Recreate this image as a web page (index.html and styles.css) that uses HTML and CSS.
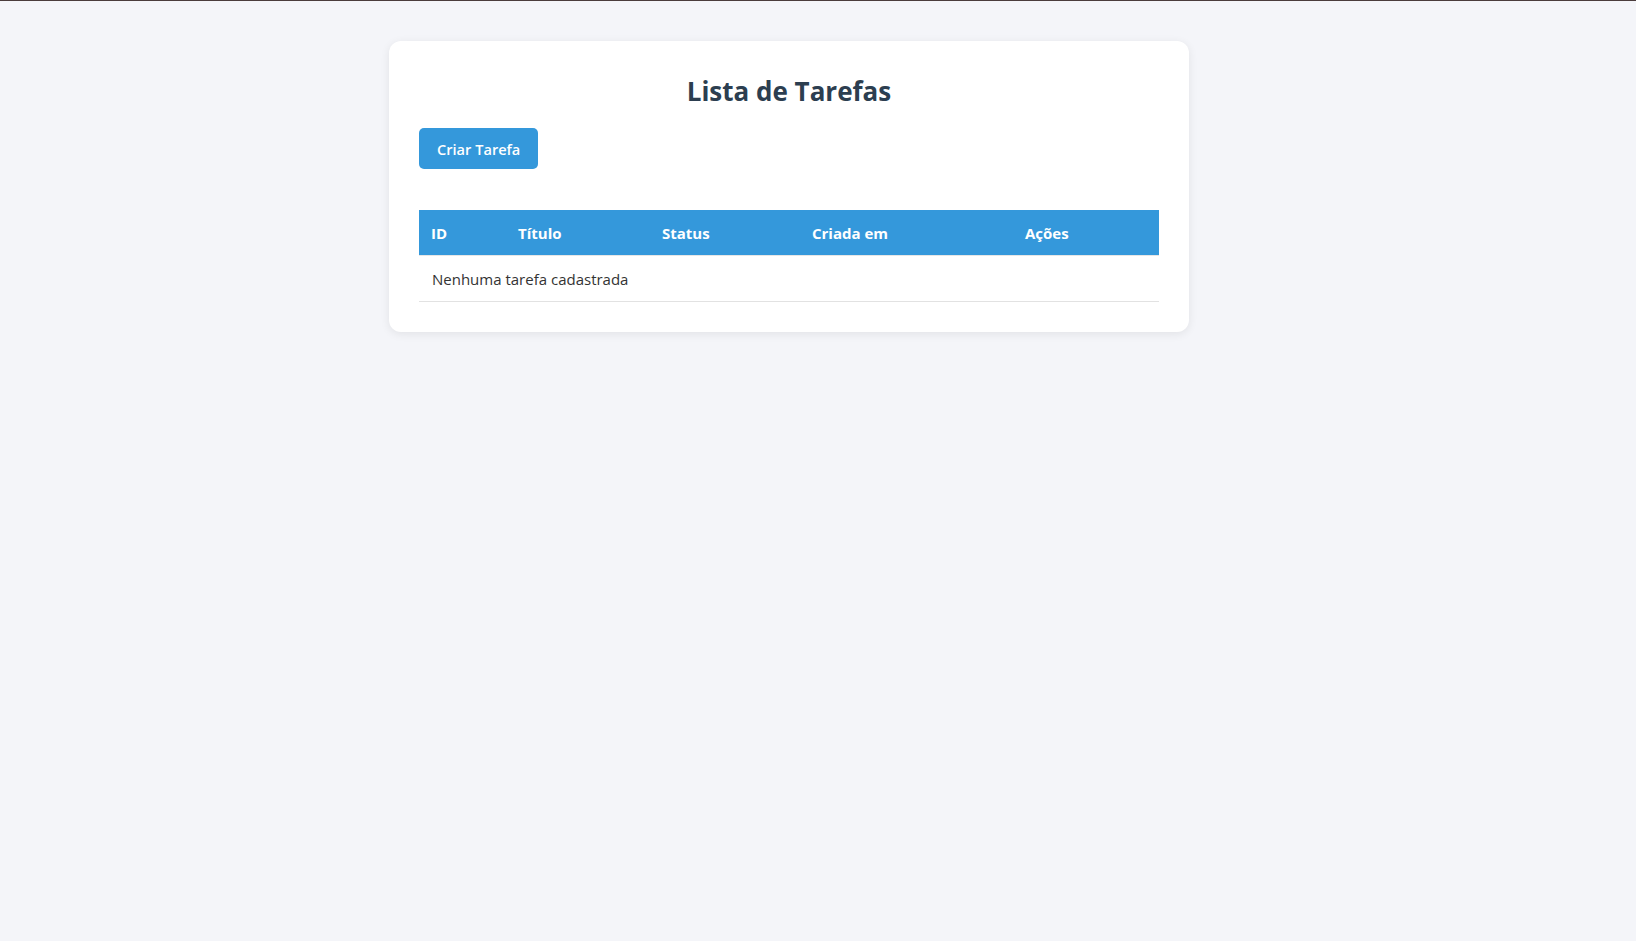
FILE: index.html
```html
<!DOCTYPE html>
<html lang="pt-BR">
<head>
<meta charset="utf-8">
<title>Lista de Tarefas</title>
<link rel="stylesheet" href="styles.css">
</head>
<body>
<div class="topline"></div>
<main class="page">
  <section class="card">
    <h1 class="title">Lista de Tarefas</h1>
    <button class="btn-create" type="button">Criar Tarefa</button>
    <table class="tasks">
      <thead>
        <tr>
          <th class="col-id">ID</th>
          <th class="col-title">Título</th>
          <th class="col-status">Status</th>
          <th class="col-date">Criada em</th>
          <th class="col-actions">Ações</th>
        </tr>
      </thead>
      <tbody>
        <tr>
          <td colspan="5">Nenhuma tarefa cadastrada</td>
        </tr>
      </tbody>
    </table>
  </section>
</main>
</body>
</html>
```
FILE: styles.css
```css
html, body {
  margin: 0;
  padding: 0;
}
body {
  background: #f4f5f9;
  font-family: "Open Sans", "Noto Sans", "Liberation Sans", sans-serif;
  color: #333;
  min-height: 941px;
}
.topline {
  height: 1px;
  background: #4a3c3c;
}
.page {
  display: flex;
  justify-content: center;
  padding: 40px 58px 0 0;
}
.card {
  width: 740px;
  padding: 30px;
  background: #fff;
  border-radius: 12px;
  box-shadow: 0 2px 10px rgba(0, 0, 0, 0.08);
}
.title {
  margin: 0 0 17px;
  text-align: center;
  font-size: 26px;
  line-height: 40px;
  font-weight: 700;
  color: #2c3e50;
}
.btn-create {
  display: block;
  height: 41px;
  padding: 0 18px;
  border: none;
  border-radius: 5px;
  background: #3498db;
  color: #fff;
  font-family: inherit;
  font-size: 14.6px;
  font-weight: 600;
  cursor: pointer;
}
.tasks {
  width: 740px;
  margin-top: 41px;
  border-collapse: collapse;
  table-layout: fixed;
}
.tasks th {
  height: 45px;
  padding: 0 12px;
  background: #3498db;
  color: #fff;
  text-align: left;
  font-size: 15px;
  font-weight: 700;
}
.tasks td {
  height: 45px;
  padding: 0 13px;
  font-size: 15px;
  color: #333;
  border-top: 1px solid #e6e6e6;
  border-bottom: 1px solid #e2e2e2;
}
.col-id { width: 63px; }
.col-title { width: 120px; }
.col-status { width: 126px; }
.col-date { width: 189px; }
.col-actions { width: 122px; }
```
